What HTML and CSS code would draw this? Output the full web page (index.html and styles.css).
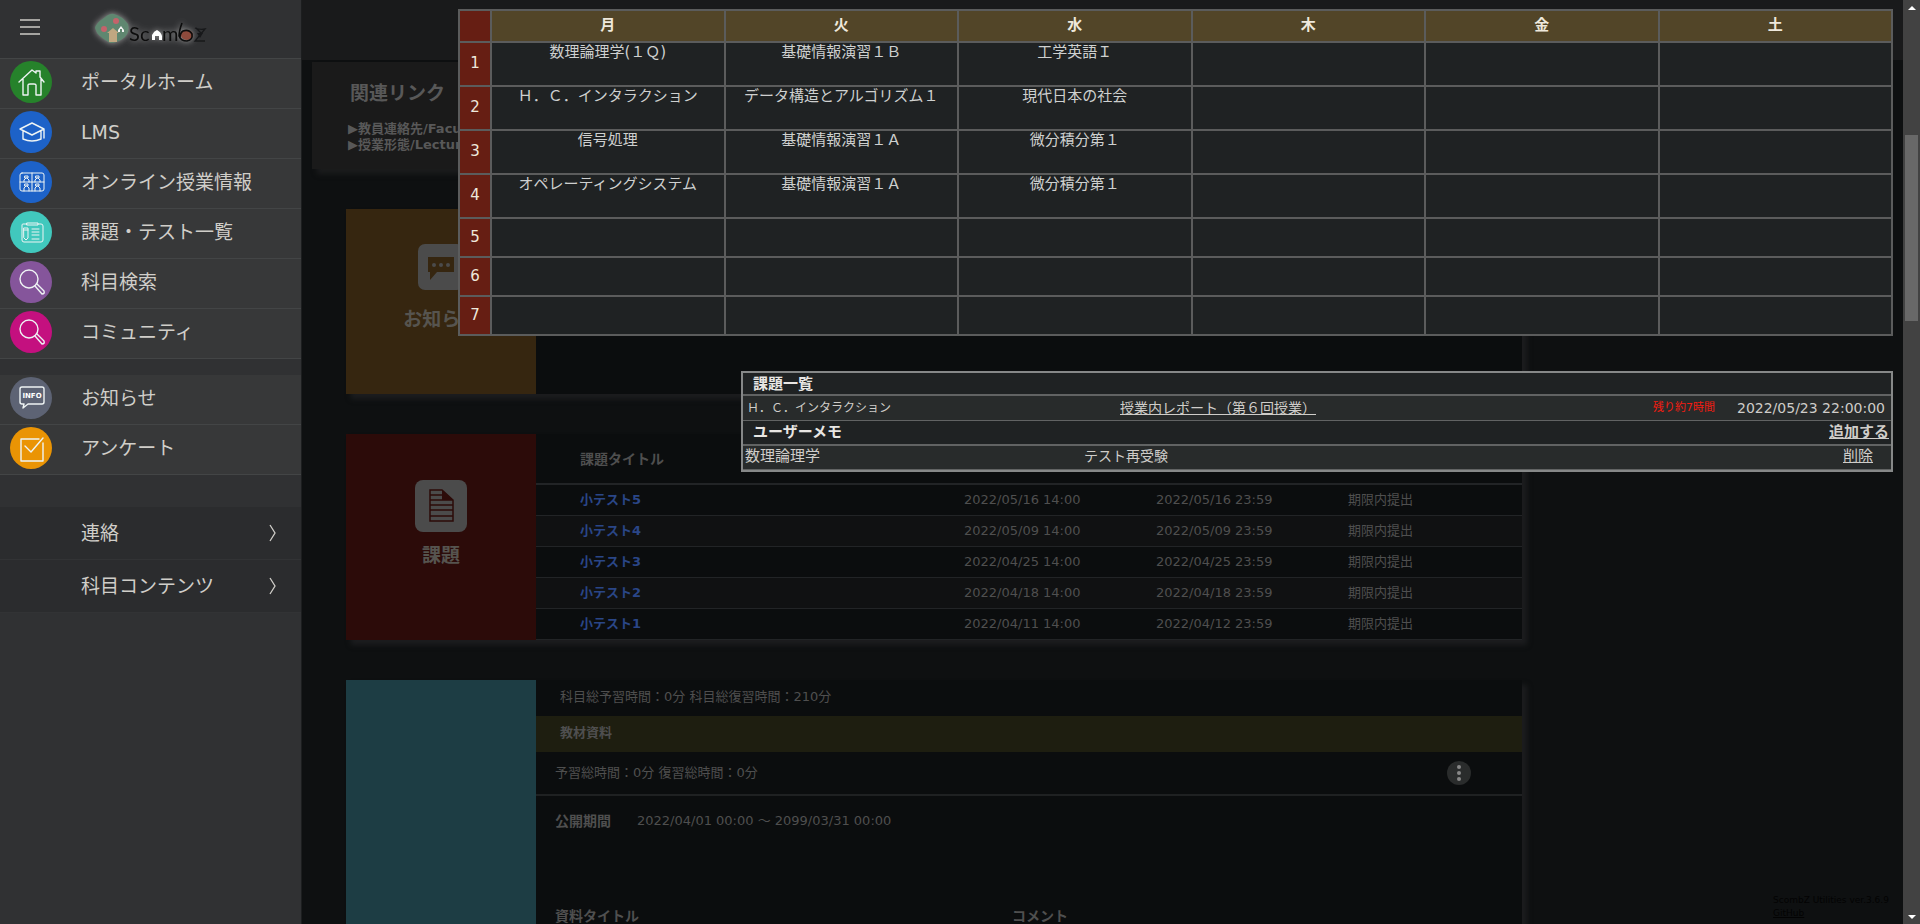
FILE: index.html
```html
<!DOCTYPE html>
<html lang="ja">
<head>
<meta charset="utf-8">
<title>ScombZ</title>
<link rel="stylesheet" href="styles.css">
</head>
<body>
<aside class="sidebar">
  <div class="brand">
    <button class="menu-button" aria-label="メニュー"><span></span><span></span><span></span></button>
    <svg class="logo" viewBox="90 4 124 42" role="img" aria-label="ScombZ">
      <g class="logo-glow">
        <path d="M95 26Q96 21 104 16Q110 11 114 12Q122 14 128 22Q130 30 125 35Q118 41 110 41Q100 35 97 31Z" fill="#5f8770"/>
        <circle cx="116" cy="19" r="3" fill="#c4636b"/><circle cx="104" cy="27" r="3" fill="#c4636b"/>
        <path d="M107 31L113 26L119 31H117V40H109V31Z" fill="#c0a781"/>
        <path d="M118 30V28L121 24L124 28V30H122V27H120V30Z" fill="#f4f4f4"/>
      </g>
      <g class="logo-glow logo-letters">
        <text x="129" y="39">S</text><text x="140" y="39">c</text><text x="162" y="39">m</text>
        <path d="M152 38V33Q154 29 157 28Q161 30 162 34V38H159V34H155V38Z" fill="#fff"/>
        <ellipse cx="187" cy="33" rx="6" ry="5" fill="#8d4a3c"/>
        <path d="M182 21Q179 29 179 34Q181 39 187 39Q193 38 192 32Q189 27 183 29Q180 31 180 36" fill="none" stroke="#0c0c0c" stroke-width="1.6"/>
      </g>
      <path d="M195 26Q200 28 205 27L195 39H205M196 26L202 32" fill="none" stroke="#17181a" stroke-width="1.3"/>
      <path d="M197 31H203L200 36Z" fill="#17181a"/>
    </svg>
  </div>
  <nav>
    <div class="menu">
      <a href="#"><span class="badge green"><svg viewBox="0 0 42 42"><path d="M9 21L22 9L26 12V10H30V16L34 21M13 18V34H18V24Q18 23 20 23H24Q26 23 26 24V34H31V18"/></svg></span>ポータルホーム</a>
      <a href="#"><span class="badge blue"><svg viewBox="0 0 42 42"><path d="M10 18L22 12L34 18L22 24ZM13 20V28Q22 32 31 28V20M34 18V27"/></svg></span>LMS</a>
      <a href="#"><span class="badge blue"><svg viewBox="0 0 42 42"><path class="thin" d="M12 12H32Q34 12 34 14V28Q34 30 32 30H12Q10 30 10 28V14Q10 12 12 12ZM22 12V30M10 21H34M14 21V19L16 17M19 21V19L17 17M25 21V19L27 17M30 21V19L28 17M14 30V27L16 25M19 30V27L17 25M25 30V27L27 25M30 30V27L28 25"/><path class="thin" d="M15 15H18V17H15ZM26 15H29V17H26ZM15 23H18V25H15ZM26 23H29V25H26Z"/></svg></span>オンライン授業情報</a>
      <a href="#"><span class="badge teal"><svg viewBox="0 0 42 42"><path class="thin" d="M17 13H13Q12 13 12 14V29Q12 31 14 31H31Q33 31 33 29V15Q33 13 31 13H28M17 12H28V14H17ZM14 17H18V27L16 29L14 27ZM14 19H18M22 18H29M22 21H29M22 24H29M22 28H29"/></svg></span>課題・テスト一覧</a>
      <a href="#"><span class="badge purple"><svg viewBox="0 0 42 42"><circle cx="19" cy="18" r="9"/><path d="M25 25L32 33Q35 33 34 30L27 23"/></svg></span>科目検索</a>
      <a href="#"><span class="badge pink"><svg viewBox="0 0 42 42"><circle cx="19" cy="18" r="9"/><path d="M25 25L32 33Q35 33 34 30L27 23"/></svg></span>コミュニティ</a>
    </div>
    <div class="menu">
      <a href="#"><span class="badge slate"><svg viewBox="0 0 42 42"><path d="M12 10H32Q34 10 34 12V25Q34 27 32 27H18L13 31L14 27H12Q10 27 10 25V12Q10 10 12 10Z"/><text x="22" y="21">INFO</text></svg></span>お知らせ</a>
      <a href="#"><span class="badge orange"><svg viewBox="0 0 42 42"><path d="M29 12H11V34H33V16M15 19L21 25L33 11"/></svg></span>アンケート</a>
    </div>
    <div class="submenu">
      <a href="#">連絡<svg viewBox="0 0 8 18"><path d="M1 1L6 9L1 17"/></svg></a>
      <a href="#">科目コンテンツ<svg viewBox="0 0 8 18"><path d="M1 1L6 9L1 17"/></svg></a>
    </div>
  </nav>
</aside>

<main class="main">
  <header class="topbar"></header>
  <section class="related">
    <h2>関連リンク</h2>
    <a href="#">▶教員連絡先/Faculty Contacts</a>
    <a href="#">▶授業形態/Lecture Style</a>
  </section>

  <div class="cards">
    <section class="card notice">
      <div class="card-label">
        <svg width="46" height="46" viewBox="0 0 46 46"><rect width="46" height="46" rx="7" fill="#4b4b4b"/><path d="M10 13H36V28H19L12 36V28H10Z" fill="#362610"/><g fill="#4b4b4b"><circle cx="16" cy="21" r="2"/><circle cx="23" cy="21" r="2"/><circle cx="30" cy="21" r="2"/></g></svg>
        <h2>お知らせ</h2>
      </div>
      <div class="card-body"></div>
    </section>

    <section class="card tasks">
      <div class="card-label">
        <svg width="52" height="52" viewBox="0 0 52 52"><rect width="52" height="52" rx="8" fill="#4b4b4b"/><path d="M15 10H27L38 20V41H15ZM15 15H27M15 20H38M15 25H38M15 30H38M15 36H38" fill="none" stroke="#2c0b09" stroke-width="1.5"/><path d="M27 10L38 20H27Z" fill="#2c0b09"/></svg>
        <h2>課題</h2>
      </div>
      <div class="card-body">
        <table class="results">
          <thead><tr><th class="title">課題タイトル</th><th></th><th></th><th></th></tr></thead>
          <tbody>
            <tr><td><a href="#">小テスト5</a></td><td>2022/05/16 14:00</td><td>2022/05/16 23:59</td><td>期限内提出</td></tr>
            <tr><td><a href="#">小テスト4</a></td><td>2022/05/09 14:00</td><td>2022/05/09 23:59</td><td>期限内提出</td></tr>
            <tr><td><a href="#">小テスト3</a></td><td>2022/04/25 14:00</td><td>2022/04/25 23:59</td><td>期限内提出</td></tr>
            <tr><td><a href="#">小テスト2</a></td><td>2022/04/18 14:00</td><td>2022/04/18 23:59</td><td>期限内提出</td></tr>
            <tr><td><a href="#">小テスト1</a></td><td>2022/04/11 14:00</td><td>2022/04/12 23:59</td><td>期限内提出</td></tr>
          </tbody>
        </table>
      </div>
    </section>

    <section class="card materials">
      <div class="card-label"></div>
      <div class="card-body">
        <p class="totals">科目総予習時間：0分 科目総復習時間：210分</p>
        <h3 class="band">教材資料</h3>
        <div class="hours"><span>予習総時間：0分 復習総時間：0分</span><button class="kebab" aria-label="操作"><i></i><i></i><i></i></button></div>
        <dl class="period"><dt>公開期間</dt><dd>2022/04/01 00:00 ～ 2099/03/31 00:00</dd></dl>
        <div class="columns"><span>資料タイトル</span><span>コメント</span></div>
      </div>
    </section>
  </div>

  <div class="overlay">
    <table class="timetable">
      <colgroup><col class="period-col"><col><col><col><col><col><col></colgroup>
      <thead><tr><th></th><th>月</th><th>火</th><th>水</th><th>木</th><th>金</th><th>土</th></tr></thead>
      <tbody>
        <tr class="tall"><th>1</th><td>数理論理学(１Ｑ)</td><td>基礎情報演習１Ｂ</td><td>工学英語Ｉ</td><td></td><td></td><td></td></tr>
        <tr class="tall"><th>2</th><td>Ｈ．Ｃ．インタラクション</td><td>データ構造とアルゴリズム１</td><td>現代日本の社会</td><td></td><td></td><td></td></tr>
        <tr class="tall"><th>3</th><td>信号処理</td><td>基礎情報演習１Ａ</td><td>微分積分第１</td><td></td><td></td><td></td></tr>
        <tr class="tall"><th>4</th><td>オペレーティングシステム</td><td>基礎情報演習１Ａ</td><td>微分積分第１</td><td></td><td></td><td></td></tr>
        <tr><th>5</th><td></td><td></td><td></td><td></td><td></td><td></td></tr>
        <tr><th>6</th><td></td><td></td><td></td><td></td><td></td><td></td></tr>
        <tr><th>7</th><td></td><td></td><td></td><td></td><td></td><td></td></tr>
      </tbody>
    </table>
    <section class="todo">
      <div class="todo-head"><h2>課題一覧</h2></div>
      <div class="todo-row assignment"><span class="course">Ｈ．Ｃ．インタラクション</span><a href="#">授業内レポート（第６回授業）</a><span class="remaining">残り約7時間</span><time>2022/05/23 22:00:00</time></div>
      <div class="todo-head"><h2>ユーザーメモ</h2><a href="#">追加する</a></div>
      <div class="todo-row memo"><span class="course">数理論理学</span><span class="note">テスト再受験</span><a href="#">削除</a></div>
    </section>
  </div>

  <footer class="version">ScombZ Utilities ver.3.6.9<br><a href="#">GitHub</a></footer>
</main>

<div class="scrollbar" aria-hidden="true">
  <svg viewBox="0 0 8 4"><path d="M4 0L8 4H0Z"/></svg>
  <div class="thumb"></div>
  <svg class="down" viewBox="0 0 8 4"><path d="M4 4L8 0H0Z"/></svg>
</div>
</body>
</html>
```
FILE: styles.css
```css
* { box-sizing: border-box; }
body {
  margin: 0;
  height: 100vh;
  display: flex;
  overflow: hidden;
  background: #0e1011;
  color: #4f4f4f;
  font: 13px/16px "DejaVu Sans", "Noto Sans CJK JP", sans-serif;
}
h2, h3, p, dl, dd { margin: 0; }
a { color: inherit; text-decoration: none; }
button { border: 0; padding: 0; background: none; }
table { border-collapse: collapse; table-layout: fixed; width: 100%; }

/* Sidebar */
.sidebar { flex: 0 0 301px; background: #303133; color: #d0cec9; }
.brand { display: flex; align-items: center; gap: 50px; height: 58px; padding: 0 20px 4px; }
.menu-button { display: flex; flex-direction: column; gap: 5px; width: 20px; }
.menu-button span { height: 2px; background: #a5a4a1; }
.logo { width: 124px; height: 42px; }
.logo-glow { filter: drop-shadow(0 0 3px #a3a3a3); }
.logo-letters { font: 20px Lato, sans-serif; fill: #0c0c0c; }
.menu { border-top: 1px solid #434546; margin-bottom: 16px; }
.menu + .menu { border-top: 0; margin-bottom: 32px; }
.menu a {
  display: flex;
  align-items: center;
  gap: 29px;
  height: 50px;
  padding: 0 10px 4px;
  font-size: 19px;
  border-bottom: 1px solid #434546;
  background: #373839;
}
.badge { width: 42px; height: 42px; border-radius: 50%; }
.badge svg { display: block; fill: none; stroke: #eef4f4; stroke-width: 1.4; stroke-linejoin: round; stroke-linecap: round; }
.badge .thin { stroke-width: 1; }
.badge text { fill: #fff; stroke: none; font: bold 7px "DejaVu Sans", sans-serif; text-anchor: middle; }
.green { background: #26822b; }
.blue { background: #1d62c8; }
.teal { background: #41c8bd; }
.purple { background: #85559b; }
.pink { background: #c4107f; }
.slate { background: #5d6374; }
.orange { background: #ea9404; }
.submenu { background: #2b2c2e; }
.submenu a {
  display: flex;
  align-items: center;
  justify-content: space-between;
  height: 53px;
  padding: 0 24px 0 81px;
  font-size: 19px;
  border-bottom: 1px solid #323335;
}
.submenu svg { width: 8px; height: 18px; fill: none; stroke: #d0cec9; stroke-width: 1.3; }

/* Page content */
.main { position: relative; flex: 1; min-width: 0; overflow: hidden; display: flex; flex-direction: column; border-left: 1px solid #1c1e1f; }
.topbar { flex: none; height: 60px; background: #191a1b; }
.related {
  flex: none;
  display: flex;
  flex-direction: column;
  max-width: 500px;
  height: 107px;
  margin: 2px 0 0 10px;
  padding: 20px 36px;
  background: #1a1a1a;
  box-shadow: 5px 5px 5px #1b1c1d;
  font-weight: bold;
  color: #585858;
}
.related h2 { margin-bottom: 17px; padding-left: 2px; font-size: 19px; line-height: 22px; }
.cards { flex: 1; display: flex; flex-direction: column; gap: 40px; max-width: 1220px; padding: 40px 0 0 44px; }
.card { display: flex; flex: none; box-shadow: 5px 5px 5px #1c1d1f; }
.card-label { flex: 0 0 190px; display: flex; flex-direction: column; align-items: center; gap: 18px; }
.card-label h2 { font-size: 19px; line-height: 22px; color: #56544f; }
.card-body { flex: 1; background: #0b0d0e; }
.notice .card-label { height: 185px; padding-top: 35px; background: #362610; }
.tasks .card-label { gap: 12px; padding-top: 46px; background: #2c0b09; }
.materials { flex: 1 0 auto; }
.materials .card-label { background: #1d3d44; }

.results th, .results td { padding: 0; text-align: left; height: 31px; border-bottom: 1px solid #222426; }
.results th { height: 50px; font-size: 14px; border-bottom-width: 2px; }
.results .title { width: 428px; }
.results th:nth-child(2), .results th:nth-child(3) { width: 192px; }
.results th:first-child, .results td:first-child { padding-left: 44px; }
.results tr:nth-child(even) td { background: #101112; }
.results a { font-weight: bold; color: #2a4687; }

.totals, .band { height: 36px; padding: 9px 24px; font-size: 13px; }
.band { background: #1e1e10; }
.hours { display: flex; align-items: center; justify-content: space-between; height: 44px; padding: 0 51px 0 19px; border-bottom: 2px solid #1f2122; }
.kebab { display: flex; flex-direction: column; align-items: center; justify-content: center; gap: 2px; width: 24px; height: 24px; border-radius: 50%; background: #2a2c2c; }
.kebab i { width: 4px; height: 4px; border-radius: 50%; background: #888; }
.period { display: flex; gap: 26px; padding: 17px 19px; }
.period dt { font-size: 14px; font-weight: bold; }
.columns { display: grid; grid-template-columns: 457px 1fr; padding: 62px 19px 0; font-size: 14px; font-weight: bold; }

/* Timetable and to-do list laid over the page */
.overlay { position: absolute; top: 9px; left: 156px; right: 10px; }
.timetable { color: #ced0cf; font-size: 15px; line-height: 18px; background: #1f2223; }
.timetable .period-col { width: 32px; }
.timetable th, .timetable td { height: 39px; padding: 0; border: 2px solid #5b5c5c; text-align: center; }
.timetable th { padding-bottom: 2px; }
.timetable td { vertical-align: top; }
.timetable thead th { height: 32px; background: #524528; color: #eee8dc; }
.timetable tbody th, .timetable thead th:first-child { background: #661e13; color: #eee8dc; font-weight: normal; }
.timetable .tall th, .timetable .tall td { height: 44px; }

.todo { margin: 35px 0 0 283px; border: 2px solid #868888; background: #1f2223; color: #cfcdc9; }
.todo a { text-decoration: underline; }
.todo-head { display: flex; align-items: center; justify-content: space-between; height: 23px; padding: 0 2px 0 10px; border-bottom: 2px solid #616363; font-size: 15px; font-weight: bold; }
.todo-head h2 { font-size: 15px; color: #e8e6e3; }
.todo-row { display: flex; align-items: center; height: 25px; background: #282b2b; border-bottom: 1px solid #616363; }
.todo-row + .todo-head { height: 25px; padding-bottom: 2px; }
.assignment { padding: 0 6px 0 4px; font-size: 14px; }
.assignment .course { flex: 0 0 373px; font-size: 12px; }
.remaining { margin-left: auto; margin-right: 22px; font-size: 11px; color: #f41c10; }
.memo { height: 24px; padding: 0 18px 4px 2px; font-size: 15px; }
.memo .course { flex: 0 0 339px; }
.memo .note { flex: 1; font-size: 14px; }

.version { position: absolute; right: 4px; bottom: 4px; width: 126px; white-space: nowrap; color: #030303; font: 9px/13px "DejaVu Sans", sans-serif; }
.version a { text-decoration: underline; }

/* Scroll bar */
.scrollbar { flex: 0 0 17px; display: flex; flex-direction: column; align-items: center; padding: 6px 2px 5px; background: #424242; }
.scrollbar svg { width: 8px; height: 4px; fill: #fff; }
.thumb { width: 13px; height: 186px; margin-top: 125px; background: #686868; }
.down { margin-top: auto; }
```
